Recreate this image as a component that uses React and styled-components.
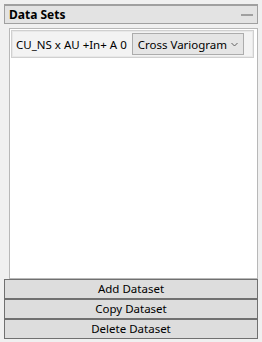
import React from 'react';
import styled, { createGlobalStyle } from 'styled-components';

const Global = createGlobalStyle`
    html, body {
        margin: 0;
        padding: 0;
        background: #f0f0f0;
    }
    body {
        font-family: "Noto Sans", "Open Sans", sans-serif;
        font-size: 11.5px;
        color: #000;
    }
`;

const Panel = styled.div`
    width: 262px;
    height: 342px;
    box-sizing: border-box;
    padding: 4px 4px 3px 4px;
    display: flex;
    flex-direction: column;
`;

const Header = styled.div`
    height: 20px;
    box-sizing: border-box;
    border: 1px solid #a0a0a0;
    border-width: 2px 1px 1px 1px;
    background: #e3e3e3;
    display: flex;
    align-items: center;
    justify-content: space-between;
    padding: 0 4px 0 4px;
`;

const Title = styled.span`
    font-weight: bold;
    font-size: 12px;
`;

const Collapse = styled.span`
    width: 12px;
    height: 2px;
    background: #a0a0a0;
`;

const List = styled.div`
    flex: 1;
    margin: 4px 0 0 5px;
    background: #fff;
    border: 1px solid #b8b8b8;
    padding: 1px;
    display: flex;
    flex-direction: column;
`;

const Item = styled.div`
    height: 28px;
    margin-right: 2px;
    box-sizing: border-box;
    border: 1px solid #d0d0d0;
    box-shadow: inset 0 0 0 1px #e8e8e8;
    background: #f3f3f3;
    display: flex;
    align-items: center;
    padding: 0 9px 0 4px;
    gap: 5px;
`;

const Label = styled.span`
    white-space: nowrap;
`;

const Select = styled.div`
    flex: 1;
    height: 22px;
    box-sizing: border-box;
    border: 1px solid #acacac;
    background: #e5e5e5;
    display: flex;
    align-items: center;
    justify-content: space-between;
    padding: 0 5px 0 5px;
`;

const Buttons = styled.div`
    display: flex;
    flex-direction: column;
`;

const Button = styled.button`
    height: 20px;
    box-sizing: border-box;
    border: 1px solid #707070;
    background: #dddddd;
    font-family: "Noto Sans", "Open Sans", sans-serif;
    font-size: 11.5px;
    color: #000;
    padding: 0;
    line-height: 16px;
`;

const Chevron = () => (
    <svg width="7" height="5" viewBox="0 0 7 5">
        <path d="M0.5 1 L3.5 4 L6.5 1" fill="none" stroke="#606060" strokeWidth="1" />
    </svg>
);

export default function App() {
    return (
        <Panel>
            <Global />
            <Header>
                <Title>Data Sets</Title>
                <Collapse />
            </Header>
            <List>
                <Item>
                    <Label>CU_NS x AU +In+ A 0</Label>
                    <Select>
                        <span>Cross Variogram</span>
                        <Chevron />
                    </Select>
                </Item>
            </List>
            <Buttons>
                <Button>Add Dataset</Button>
                <Button>Copy Dataset</Button>
                <Button>Delete Dataset</Button>
            </Buttons>
        </Panel>
    );
}
